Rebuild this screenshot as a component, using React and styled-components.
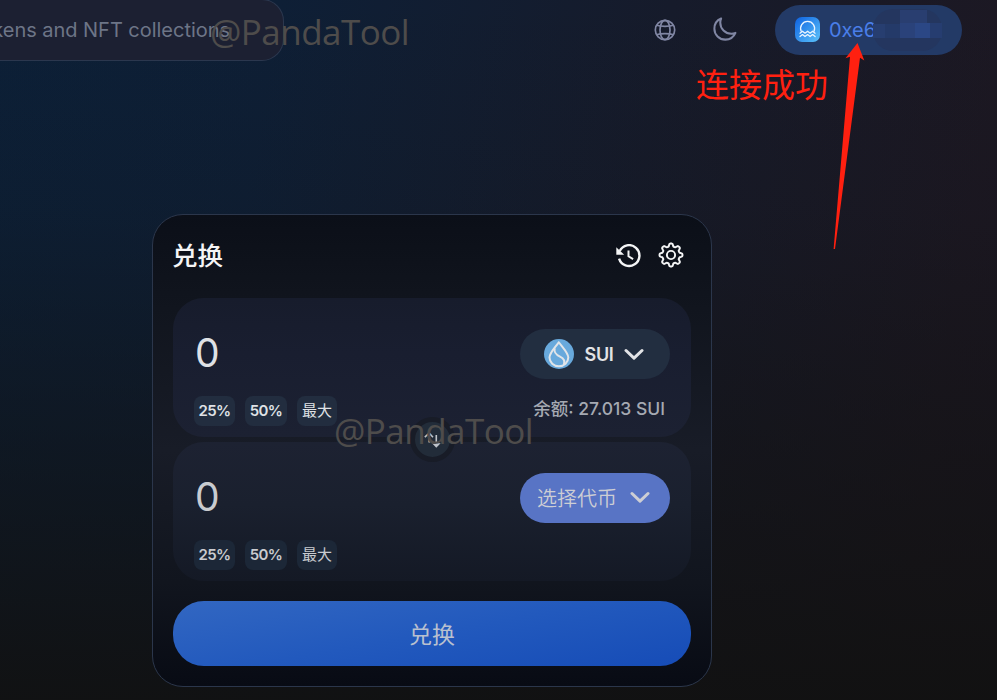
import React from "react";
import styled, { createGlobalStyle } from "styled-components";

const Global = createGlobalStyle`
  *{box-sizing:border-box}
  body{margin:0;background:#121116;overflow:hidden}
  button{border:0;padding:0;font-family:inherit;color:inherit}
`;

const Page = styled.div`
  position: relative;
  width: 997px;
  height: 700px;
  overflow: hidden;
  font-family: Inter, "Noto Sans CJK SC", sans-serif;
  color: #e2e3e7;
  background:
    linear-gradient(180deg, rgba(17,17,17,0) 0%, rgba(17,17,17,0.15) 30%, rgba(17,17,17,0.95) 100%),
    linear-gradient(100deg, #0c2038 0%, #0e1f36 25%, #161b2b 60%, #1c1823 90%, #1c1722 100%);
`;

const Header = styled.header`
  height: 61px;
  display: flex;
  align-items: flex-start;
  padding-right: 35px;
`;

const Search = styled.div`
  width: 284px;
  height: 62px;
  margin-top: -1px;
  border: 1px solid #2b374e;
  border-left: 0;
  border-radius: 0 22px 22px 0;
  background: #1c2032;
  display: flex;
  justify-content: flex-end;
  align-items: center;
  padding-right: 53px;
  font-size: 20px;
  letter-spacing: -0.03px;
  white-space: nowrap;
  color: #6d7587;
`;

const HeaderActions = styled.div`
  margin-left: auto;
  height: 60px;
  display: flex;
  align-items: center;
  color: #8086a3;
`;

const Wallet = styled.div`
  margin-left: 37px;
  width: 187px;
  height: 50px;
  border-radius: 25px;
  background: #233a66;
  display: flex;
  align-items: center;
  padding-left: 20px;
  font-size: 20px;
  color: #4a7ee8;
`;

const Address = styled.span`
  margin-left: 9px;
  width: 49px;
`;

const Mask = styled.svg`
  margin-left: -5px;
  position: relative;
`;

const Card = styled.main`
  width: 560px;
  height: 473px;
  margin: 153px 0 0 152px;
  border: 1px solid #2b364b;
  border-radius: 31px;
  padding: 0 20px;
  background: linear-gradient(180deg, #0b0f18 0%, #11151e 20%, #181c27 50%, #11151e 78%, #080b14 100%);
`;

const CardHead = styled.div`
  height: 83px;
  display: flex;
  align-items: center;
  gap: 17px;
  padding: 0 7px 2px 0;
`;

const Title = styled.h1`
  flex: 1;
  margin: 1px 0 0 -1px;
  font-size: 25.5px;
  line-height: 36px;
  font-weight: 500;
  color: #f5f5f6;
`;

const Panel = styled.section`
  height: 139px;
  border-radius: 31px;
  margin-bottom: ${(p) => (p.$last ? 20 : 5)}px;
  padding: 31px 21px 0;
  background: ${(p) =>
    p.$last
      ? "linear-gradient(180deg,#1d2232,#1a202e 45%,#141925)"
      : "linear-gradient(180deg,#171c2c,#191e30 40%,#1c2132)"};
  color: ${(p) => (p.$last ? "#c9cbcf" : "#dfe1e5")};
`;

const Row = styled.div`
  height: ${(p) => p.$h}px;
  display: flex;
  align-items: center;
  justify-content: space-between;
`;

const Amount = styled.span`
  font-size: 39px;
  line-height: 48px;
  margin: -3px 0 0 1px;
`;

const TokenButton = styled.button`
  width: 150px;
  height: 50px;
  border-radius: 25px;
  display: flex;
  align-items: center;
  justify-content: center;
  gap: ${(p) => (p.$primary ? 13 : 10.5)}px;
  padding: ${(p) => (p.$primary ? "0 3px 1px 0" : "0 2px 0 0")};
  background: ${(p) => (p.$primary ? "#5874c5" : "#222e40")};
  font-size: ${(p) => (p.$primary ? 20 : 18)}px;
  font-weight: ${(p) => (p.$primary ? 350 : 600)};
  letter-spacing: ${(p) => (p.$primary ? 0 : -0.3)}px;
  color: ${(p) => (p.$primary ? "#cdced4" : "#e2e3e6")};
`;

const Presets = styled.div`
  display: flex;
  gap: 10px;
  padding-top: 1px;
`;

const Preset = styled.button`
  width: ${(p) => p.$w}px;
  height: 30px;
  border-radius: 8px;
  padding-bottom: ${(p) => (p.$cjk ? 3 : 2)}px;
  letter-spacing: ${(p) => (p.$cjk ? 0 : -0.6)}px;
  background: ${(p) => (p.$dim ? "#1c2737" : "#222d3f")};
  font-size: 15px;
  font-weight: ${(p) => (p.$cjk ? 400 : 600)};
`;

const Balance = styled.span`
  font-size: 17.5px;
  font-weight: 500;
  color: #a5a9b2;
  padding: 0 5px 6px 0;
`;

const Submit = styled.button`
  display: block;
  width: 100%;
  height: 65px;
  border-radius: 31px;
  padding-bottom: 2px;
  font-size: 23px;
  color: #b9c0cf;
  background: linear-gradient(170deg, #3267c2 0%, #2259bd 50%, #164cb7 100%);
`;

const SwapDirection = styled.div`
  position: absolute;
  left: 410px;
  top: 417px;
  width: 45px;
  height: 45px;
  border: 5px solid #181c27;
  border-radius: 50%;
  background: #222c39;
  display: grid;
  place-items: center;
`;

const Watermark = styled.div`
  position: absolute;
  left: ${(p) => p.$x}px;
  top: ${(p) => p.$y}px;
  font: 35px/44px "Open Sans", "Noto Sans", sans-serif;
  letter-spacing: -0.55px;
  white-space: nowrap;
  color: #4e4c4b;
`;

const Note = styled.div`
  position: absolute;
  left: 696px;
  top: 61px;
  font-size: 33px;
  line-height: 48px;
  color: #ff2010;
`;

const Arrow = styled.svg`
  position: absolute;
  left: 820px;
  top: 40px;
`;

const Chevron = () => (
  <svg width="20" height="13" viewBox="0 0 20 13" fill="none" stroke="currentColor" strokeWidth="3" strokeLinecap="round" strokeLinejoin="round">
    <path d="M2 2.5l8 7.7 8-7.7" />
  </svg>
);

const GlobeIcon = styled.svg`
  margin: 0 35px 1px 0;
`;

const Globe = () => (
  <GlobeIcon width="22" height="22" viewBox="0 0 22 22" fill="none" stroke="currentColor" strokeWidth="1.7">
    <circle cx="11" cy="11" r="9.7" />
    <ellipse cx="11" cy="11" rx="5" ry="9.7" />
    <path d="M2.4 6.3c4.6 1.4 12.6 1.4 17.2 0M2.4 15.7c4.6-1.4 12.6-1.4 17.2 0" />
  </GlobeIcon>
);

const MoonIcon = styled.svg`
  margin-bottom: 2px;
`;

const Moon = () => (
  <MoonIcon width="27" height="27" viewBox="0 0 24 24" fill="none" stroke="currentColor" strokeWidth="1.8" strokeLinecap="round" strokeLinejoin="round">
    <path d="M21.752 15.002A9.718 9.718 0 0118 15.75c-5.385 0-9.75-4.365-9.75-9.75 0-1.33.266-2.597.748-3.752A9.753 9.753 0 003 11.25C3 16.635 7.365 21 12.75 21a9.753 9.753 0 009.002-5.998z" />
  </MoonIcon>
);

const WalletMark = styled.svg`
  margin-bottom: 1px;
`;

const WalletLogo = () => (
  <WalletMark width="25" height="25" viewBox="0 0 25 25" fill="none">
    <defs>
      <linearGradient id="wl" x1="0" y1="0" x2="1" y2="1">
        <stop stopColor="#0d61e0" />
        <stop offset="1" stopColor="#5cc3fb" />
      </linearGradient>
    </defs>
    <rect width="25" height="25" rx="7" fill="url(#wl)" />
    <g stroke="#e9f4ff" strokeWidth="1.3" strokeLinejoin="round" strokeLinecap="round">
      <path d="M6.2 14.3a7 7 0 1 1 12.8 0" />
      <path d="M5 16.2l2.5-2 2.5 2 2.6-2 2.5 2 2.5-2 2.5 2" />
      <path d="M5 19.6l2.5-2 2.5 2 2.6-2 2.5 2 2.5-2 2.5 2" />
    </g>
  </WalletMark>
);

const SuiLogo = () => (
  <svg width="30" height="30" viewBox="0 0 30 30">
    <circle cx="15" cy="15" r="15" fill="#68a9dc" />
    <g fill="none" stroke="#e1e5e9" strokeWidth="2" strokeLinejoin="round">
      <path d="M14.8 3.2C11.5 8.2 5.5 13.8 5.5 18.6a9.4 8.7 0 0 0 18.8 0C24.3 13.8 18.2 8.2 14.8 3.2z" />
      <path d="M10.7 9.3c-1 4.5 1.4 6.4 5.3 8.4 3.7 1.9 5.3 4.2 3.8 7.5" />
    </g>
  </svg>
);

const HistoryIcon = () => (
  <svg width="25" height="24" viewBox="0 0 25 24" fill="none" stroke="#f4f5f6" strokeWidth="2.4">
    <path d="M3.7 7A10.4 10.4 0 1 1 3.1 14.6" />
    <path d="M.3 3.2v7.6H8.2z" fill="#f4f5f6" stroke="none" />
    <path d="M12.5 6.5v5.8l4.6 2.8" strokeWidth="2" />
  </svg>
);

const gearOutline = Array.from({ length: 97 }, (_, i) => {
  const a = (i / 96) * Math.PI * 2;
  const wave = Math.tanh(2.2 * Math.cos(8 * a)) / Math.tanh(2.2);
  const r = 9.3 + 1.3 * wave;
  return `${i ? "L" : "M"}${(12 + r * Math.sin(a)).toFixed(2)} ${(12 - r * Math.cos(a)).toFixed(2)}`;
}).join("");

const Gear = styled.svg`
  margin-bottom: 2px;
`;

const GearIcon = () => (
  <Gear width="26" height="26" viewBox="0 0 24 24" fill="none" stroke="#f4f5f6" strokeWidth="1.8" strokeLinejoin="round">
    <path d={`${gearOutline}z`} />
    <circle cx="12" cy="12" r="3.8" />
  </Gear>
);

const SwapArrows = () => (
  <svg width="18" height="18" viewBox="0 0 18 18" fill="none" stroke="#bfc3c9" strokeWidth="1.6">
    <path d="M.8 6.2l4.4-4 3.8 4M5.2 2.4v9M12.3 4v9" />
    <path d="M8 12.3h8.6l-4.3 4.4z" fill="#bfc3c9" stroke="none" />
  </svg>
);

const PresetRow = ({ dim }) => (
  <Presets>
    <Preset $w={41} $dim={dim}>25%</Preset>
    <Preset $w={42} $dim={dim}>50%</Preset>
    <Preset $w={40} $dim={dim} $cjk>最大</Preset>
  </Presets>
);

export default function App() {
  return (
    <Page>
      <Global />
      <Header>
        <Search>kens and NFT collections</Search>
        <HeaderActions>
          <Globe />
          <Moon />
          <Wallet>
            <WalletLogo />
            <Address>0xe6</Address>
            <Mask width="69" height="42" viewBox="0 0 69 42">
              <rect width="69" height="42" rx="20" fill="#24365f" />
              <path d="M0 15h12v14H0z" fill="#273e70" />
              <path d="M12 15h15v14H12z" fill="#243a69" />
              <path d="M27 1h27v13H27z" fill="#293e70" />
              <path d="M27 14h15v15H27z" fill="#2a427a" />
              <path d="M42 14h15v15H42z" fill="#2b4785" />
              <path d="M57 14h12v15H57z" fill="#263d70" />
            </Mask>
          </Wallet>
        </HeaderActions>
      </Header>

      <Card>
        <CardHead>
          <Title>兑换</Title>
          <HistoryIcon />
          <GearIcon />
        </CardHead>
        <Panel>
          <Row $h={50}>
            <Amount>0</Amount>
            <TokenButton><SuiLogo />SUI<Chevron /></TokenButton>
          </Row>
          <Row $h={63}>
            <PresetRow />
            <Balance>余额: 27.013 SUI</Balance>
          </Row>
        </Panel>
        <Panel $last>
          <Row $h={50}>
            <Amount>0</Amount>
            <TokenButton $primary>选择代币<Chevron /></TokenButton>
          </Row>
          <Row $h={63}>
            <PresetRow dim />
          </Row>
        </Panel>
        <Submit>兑换</Submit>
      </Card>

      <SwapDirection><SwapArrows /></SwapDirection>
      <Watermark $x={210} $y={10}>@PandaTool</Watermark>
      <Watermark $x={334} $y={409}>@PandaTool</Watermark>
      <Note>连接成功</Note>
      <Arrow width="50" height="212" viewBox="0 0 50 212">
        <path d="M37.5 3L44.3 20.5l-4.3-2.7L15 209h-1.4L30 16.8l-4.5 1.5z" fill="#ff2010" />
      </Arrow>
    </Page>
  );
}
